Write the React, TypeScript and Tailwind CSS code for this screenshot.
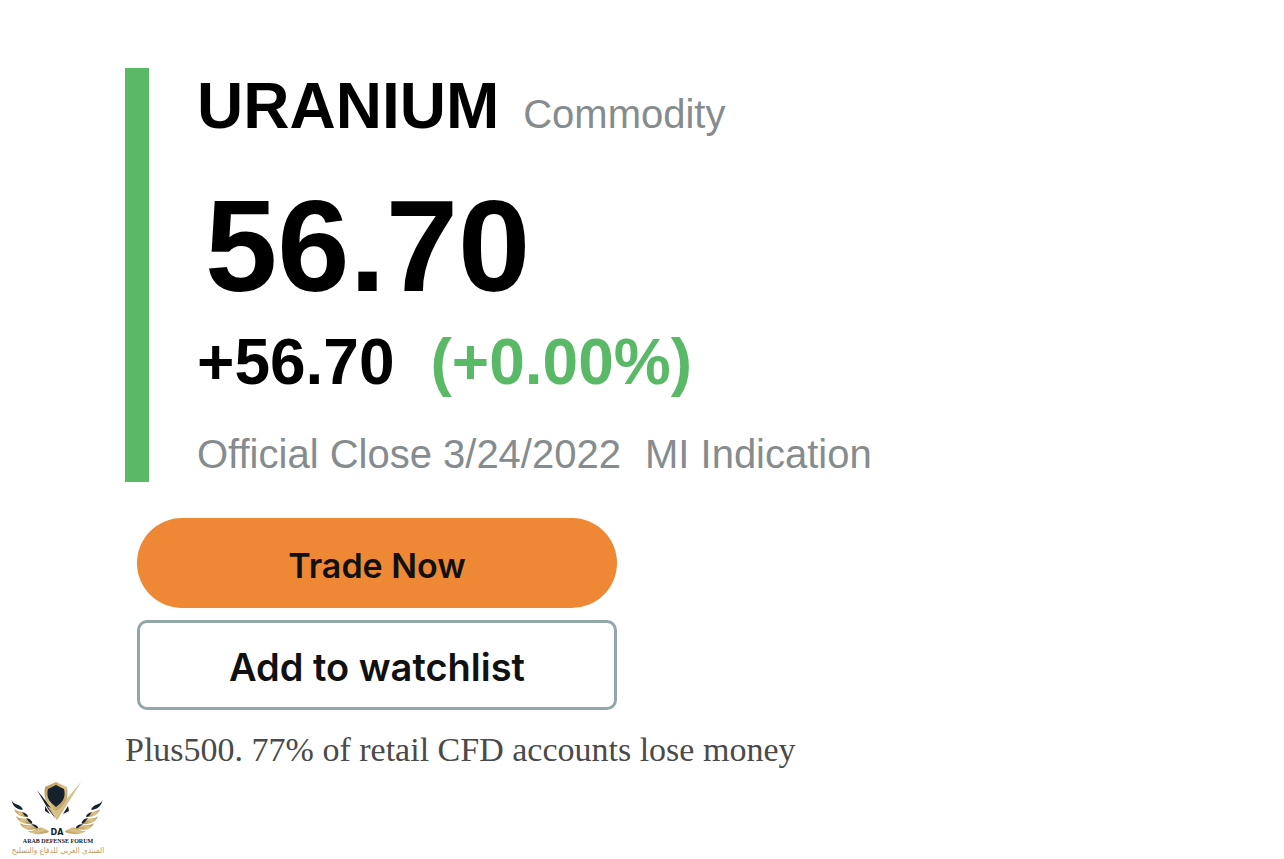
function ForumLogo() {
  return (
    <svg viewBox="0 0 115 84" className="h-[84px] w-[115px]" role="img" aria-label="Arab Defense Forum">
      <defs>
        <linearGradient id="gold" x1="0" y1="0" x2="1" y2="1">
          <stop offset="0" stopColor="#b08a4c" />
          <stop offset="0.5" stopColor="#dcc48d" />
          <stop offset="1" stopColor="#ae8a4c" />
        </linearGradient>
        <g id="wing">
          <path d="M11.5 26 C13 30 17 30 20 32 C23 34 23 36 22 36 C17 35 13 33 11.5 26Z" fill="#15222b" />
          <path d="M14 35 C17 38 22 37 25 39 C28 41 28 43 27 43 C21 43 16 41 14 35Z" fill="url(#gold)" />
          <path d="M22 38 C26 39 28 41 28 43 L25 42Z" fill="#15222b" />
          <path d="M16 42 C20 46 26 43 30 46 C32 48 32 50 30 50 C23 50 18 48 16 42Z" fill="url(#gold)" />
          <path d="M26 44 C31 45 33 48 32 50 L29 48Z" fill="#15222b" />
          <path d="M20 49 C25 53 31 49 36 52 C38 53 38 55 36 55 C28 57 22 55 20 49Z" fill="url(#gold)" />
          <path d="M31 50 C36 50 39 53 38 55 L35 53Z" fill="#15222b" />
          <path d="M28 57 C35 58 37 52 43 54 C46 55 49 57 49 58 C41 61 33 61 28 57Z" fill="url(#gold)" />
        </g>
      </defs>
      <use href="#wing" />
      <use href="#wing" transform="translate(114 0) scale(-1 1)" />
      <path d="M37 16 L53 36 L55 44 L48 35Z" fill="#15222b" />
      <path d="M45 32 L50 40 L45 37Z" fill="#15222b" />
      <path d="M68 32 L69 37 L63 40Z" fill="#15222b" />
      <path d="M81 8 L57 46 L47 32 L57 36Z" fill="url(#gold)" />
      <path d="M56 8 L67 13 C69 24 66 31 56 37 C46 31 43 24 45 13Z" fill="url(#gold)" />
      <path d="M56 11 L64 15 C66 23 63 28 56 33 C49 28 46 23 48 15Z" fill="#15222b" />
      <path d="M81 8 L57 46 L51 37 L57 39 L67 26Z" fill="url(#gold)" />
      <text x="57" y="61" textAnchor="middle" fill="#15222b" className="font-['DejaVu_Sans',sans-serif] text-[8px] font-bold">
        DA
      </text>
      <text
        x="58"
        y="69"
        textAnchor="middle"
        fill="#15222b"
        className="font-['Liberation_Serif',serif] text-[6px] font-bold"
      >
        ARAB DEFENSE FORUM
      </text>
      <text
        x="58"
        y="79"
        textAnchor="middle"
        direction="rtl"
        lang="ar"
        fill="#bd9a60"
        className="font-['DejaVu_Sans_Condensed','DejaVu_Sans',sans-serif] text-[8px]"
      >
        المنتدى العربي للدفاع والتسليح
      </text>
    </svg>
  );
}

function Quote() {
  return (
    <article className="border-l-[24px] border-[#59b966] pt-0.5 pb-1 pl-12">
      <header className="flex items-baseline gap-6">
        <h1 className="text-[64px] leading-[72px] font-bold text-black">URANIUM</h1>
        <span className="text-[40px] leading-[48px] text-[#868c8e]">Commodity</span>
      </header>
      <p className="mt-10 pl-2 text-[130px] leading-[128px] font-bold text-black">56.70</p>
      <p className="mt-4 flex gap-9 text-[64px] leading-[72px] font-bold">
        <span className="text-black">+56.70</span>
        <span className="text-[#59b966]">(+0.00%)</span>
      </p>
      <p className="mt-8 flex gap-6 text-[40px] leading-[48px] text-[#868c8e]">
        <span>Official Close 3/24/2022</span>
        <span>MI Indication</span>
      </p>
    </article>
  );
}

export default function App() {
  return (
    <div className="bg-white font-['Liberation_Sans',Arial,sans-serif]">
      <main className="px-[125px] pt-[68px]">
        <Quote />
        <div className="mt-9 ml-3 flex max-w-[480px] flex-col gap-3">
          <button
            type="button"
            className="h-[90px] rounded-full bg-[#ee8835] pt-1 font-[Inter,sans-serif] text-[34px] font-semibold text-[#111111]"
          >
            Trade Now
          </button>
          <button
            type="button"
            className="h-[90px] rounded-[10px] border-[3px] border-[#93a6aa] bg-white pt-1 font-[Inter,sans-serif] text-[38px] font-semibold text-[#111111]"
          >
            Add to watchlist
          </button>
        </div>
        <p className="mt-5 font-['Liberation_Serif',serif] text-[34px] leading-[40px] text-[#4a4a4a]">
          Plus500. 77% of retail CFD accounts lose money
        </p>
      </main>
      <footer className="mt-1">
        <ForumLogo />
      </footer>
    </div>
  );
}
